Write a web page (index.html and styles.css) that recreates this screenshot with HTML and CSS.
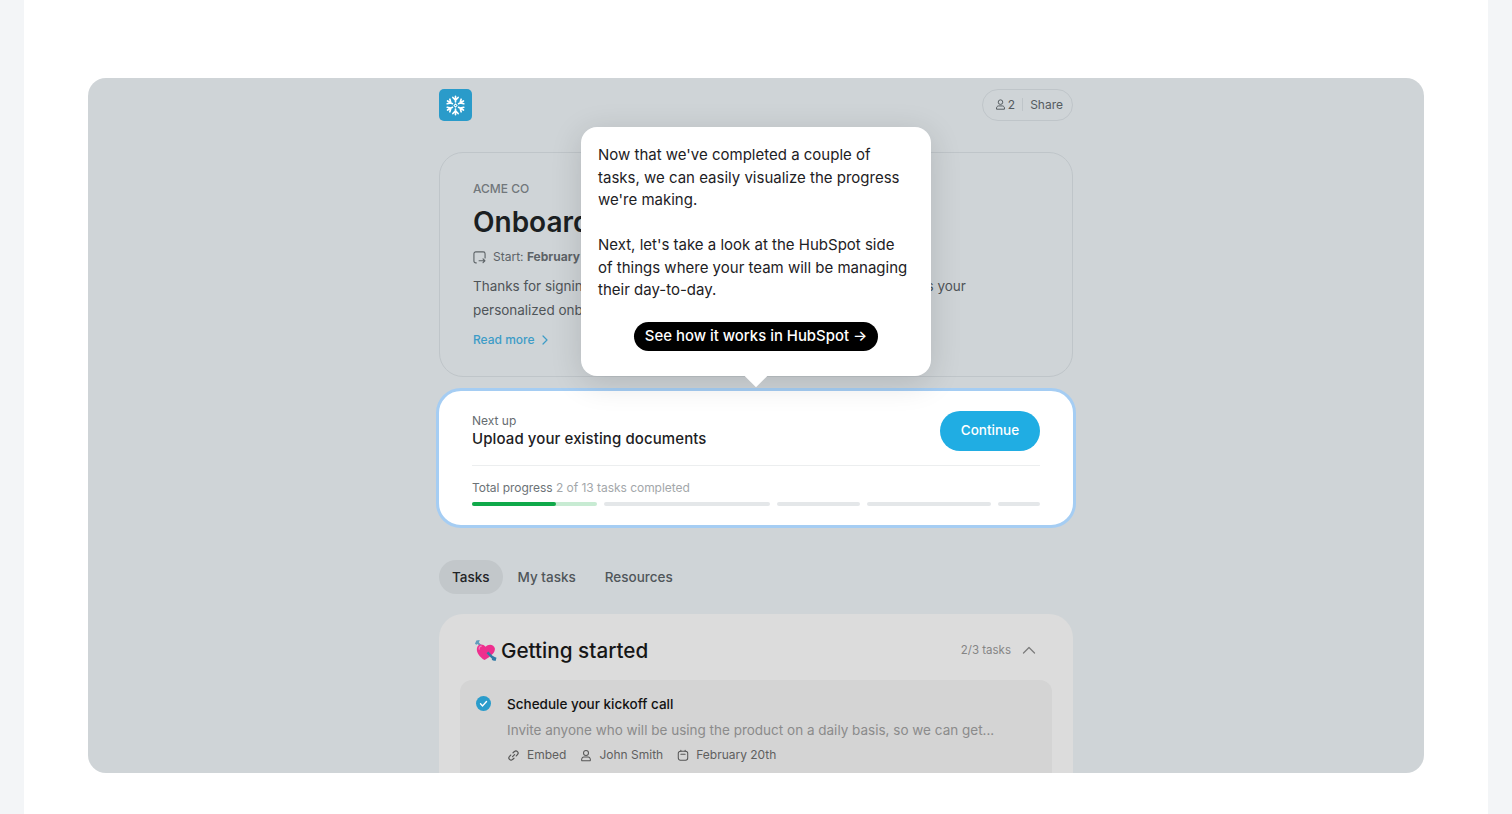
FILE: index.html
```html
<!DOCTYPE html>
<html lang="en">
<head>
    <meta charset="UTF-8">
    <meta name="viewport" content="width=device-width, initial-scale=1.0">
    <title>Onboarding</title>
    <link rel="stylesheet" href="styles.css">
</head>
<body>

<div class="sheet">
    <div class="frame">
        <div class="column">

            <!-- Top bar -->
            <div class="topbar">
                <div class="logo">
                    <svg width="21" height="21" viewBox="0 0 24 24" fill="none" stroke="#fff" stroke-width="1.900" stroke-linecap="round" stroke-linejoin="round">
                        <path d="M12 8V1.500M9 2.800l3 3.200 3-3.200"/>
                        <g transform="rotate(60 12 12)"><path d="M12 8V1.500M9 2.800l3 3.200 3-3.200"/></g>
                        <g transform="rotate(120 12 12)"><path d="M12 8V1.500M9 2.800l3 3.200 3-3.200"/></g>
                        <g transform="rotate(180 12 12)"><path d="M12 8V1.500M9 2.800l3 3.200 3-3.200"/></g>
                        <g transform="rotate(240 12 12)"><path d="M12 8V1.500M9 2.800l3 3.200 3-3.200"/></g>
                        <g transform="rotate(300 12 12)"><path d="M12 8V1.500M9 2.800l3 3.200 3-3.200"/></g>
                        <path d="M12 10.200 13.800 12 12 13.800 10.200 12Z" stroke-width="1.200"/>
                    </svg>
                </div>
                <div class="share">
                    <svg width="11" height="13" viewBox="0 0 14 14" fill="none" stroke="#50565a" stroke-width="1.200">
                        <circle cx="7" cy="4" r="2.900"/>
                        <path d="M2 13c-.6-2.600 1-4.200 2.600-4.200h4.800c1.600 0 3.200 1.600 2.600 4.200Z" stroke-linejoin="round"/>
                    </svg>
                    <span class="share-count">2</span>
                    <span class="share-sep"></span>
                    <span>Share</span>
                </div>
            </div>

            <!-- Plan intro -->
            <div class="hero">
                <div class="company">ACME CO</div>
                <h1>Onboarding plan</h1>
                <div class="start">
                    <svg width="13" height="13" viewBox="0 0 14 14" fill="none" stroke="#5d6367" stroke-width="1.200" stroke-linecap="round" stroke-linejoin="round">
                        <path d="M3.500 12.800H3A2 2 0 0 1 1 10.800V3a2 2 0 0 1 2-2h8a2 2 0 0 1 2 2v4.500"/>
                        <path d="M6.500 10.500h6.300M10.800 8.500l2 2-2 2"/>
                    </svg>
                    <span>Start: <b>February 20th</b></span>
                </div>
                <p class="intro">Thanks for signing up! We're so excited to start working with you. This is your<br>personalized onboarding plan.</p>
                <a class="read-more" href="#">Read more
                    <svg width="8" height="10" viewBox="0 0 8 10" fill="none" stroke="#3d9cc7" stroke-width="1.200" stroke-linecap="round" stroke-linejoin="round"><path d="M2 1l4 4-4 4"/></svg>
                </a>
            </div>

            <!-- Highlighted progress card -->
            <div class="next-card">
                <div class="next-row">
                    <div>
                        <div class="next-label">Next up</div>
                        <div class="next-title">Upload your existing documents</div>
                    </div>
                    <button class="continue">Continue</button>
                </div>
                <div class="progress-label">Total progress <span>2 of 13 tasks completed</span></div>
                <div class="progress">
                    <div class="seg seg-3 seg-first"><div class="seg-done"></div></div>
                    <div class="seg seg-4"></div>
                    <div class="seg seg-2"></div>
                    <div class="seg seg-3"></div>
                    <div class="seg seg-1"></div>
                </div>
            </div>

            <!-- Tabs -->
            <div class="tabs">
                <a class="tab active" href="#">Tasks</a>
                <a class="tab" href="#">My tasks</a>
                <a class="tab" href="#">Resources</a>
            </div>

            <!-- Task group -->
            <div class="group">
                <div class="group-head">
                    <h2>
                        <svg width="23" height="23" viewBox="0 0 24 24">
                            <path d="M3 3l5 5" stroke="#5f9dbd" stroke-width="2.200"/>
                            <path d="M1 5 2.500 1.500 6 1 5 4 2.500 6Z" fill="#5f9dbd"/>
                            <path d="M11 22C6 18.500 2.500 14.500 3 9.800 3.500 5.500 9 4 12 8.200 15 4.500 21 5.500 21.800 10 22.300 14.500 17 18.500 11 22Z" fill="#ee2f8e"/>
                            <path d="M8 7.500C6 7.500 5 9 5.500 11" stroke="#f97fbc" stroke-width="1.200" fill="none"/>
                            <path d="M14 14l7.500 7.500" stroke="#2f7ba6" stroke-width="2.600"/>
                            <path d="M18.500 22l1.500-4 3.500 1.500-1 3.500Z" fill="#2f7ba6"/>
                        </svg>
                        Getting started
                    </h2>
                    <div class="group-count">
                        <span>2/3 tasks</span>
                        <svg width="14" height="8" viewBox="0 0 14 8" fill="none" stroke="#7d7d7d" stroke-width="1.300" stroke-linecap="round" stroke-linejoin="round"><path d="M1.500 7 7 1.500 12.500 7"/></svg>
                    </div>
                </div>
                <div class="task">
                    <svg class="task-check" width="15" height="15" viewBox="0 0 15 15">
                        <circle cx="7.500" cy="7.500" r="7.500" fill="#2a9ccb"/>
                        <path d="M4.500 7.800l2.100 2.100 3.900-4.400" fill="none" stroke="#fff" stroke-width="1.400" stroke-linecap="round" stroke-linejoin="round"/>
                    </svg>
                    <div class="task-body">
                        <div class="task-title">Schedule your kickoff call</div>
                        <div class="task-desc">Invite anyone who will be using the product on a daily basis, so we can get...</div>
                        <div class="task-meta">
                            <span class="meta-item">
                                <svg class="meta-link" width="11" height="11" viewBox="0 0 12 12" fill="none" stroke="#555" stroke-width="1.300" stroke-linecap="round"><path d="M5 7.200 7.200 5M5.500 3 7 1.700a2.300 2.300 0 0 1 3.300 3.300L9 6.500M6.500 9 5 10.300A2.300 2.300 0 0 1 1.700 7L3 5.500"/></svg>
                                Embed
                            </span>
                            <span class="meta-item">
                                <svg width="12" height="13" viewBox="0 0 14 14" fill="none" stroke="#555" stroke-width="1.200" stroke-linejoin="round"><circle cx="7" cy="4" r="2.900"/><path d="M2 13c-.6-2.600 1-4.200 2.600-4.200h4.800c1.600 0 3.200 1.600 2.600 4.200Z"/></svg>
                                John Smith
                            </span>
                            <span class="meta-item">
                                <svg width="12" height="13" viewBox="0 0 14 14" fill="none" stroke="#555" stroke-width="1.200" stroke-linecap="round"><rect x="1.500" y="2" width="11" height="10.500" rx="2.500"/><path d="M4.500 5.500h5M4.500 .8v1.200M9.500 .8v1.200"/></svg>
                                February 20th
                            </span>
                        </div>
                    </div>
                </div>
            </div>
        </div>

        <!-- Guided tour tooltip -->
        <div class="tooltip">
            <p>Now that we've completed a couple of tasks, we can easily visualize the progress we're making.</p>
            <p>Next, let's take a look at the HubSpot side of things where your team will be managing their day-to-day.</p>
            <a class="tooltip-btn" href="#">See how it works in HubSpot →</a>
        </div>
    </div>
</div>

</body>
</html>
```

FILE: styles.css
```css
body {
    font-family: Inter, "Liberation Sans", sans-serif;
    background-color: #f3f5f7;
    margin: 0;
    padding: 0 24px;
}

.sheet {
    background-color: white;
    height: 814px;
    padding: 78px 64px 0;
    box-sizing: border-box;
    overflow: hidden;
}

.frame {
    position: relative;
    height: 695px;
    background-color: #cfd4d7;
    border-radius: 18px;
    overflow: hidden;
}

.column {
    width: 634px;
    margin: 0 auto;
}

.topbar {
    display: flex;
    justify-content: space-between;
    align-items: center;
    padding-top: 11px;
    margin-bottom: 31px;
}

.logo {
    width: 33px;
    height: 32px;
    display: flex;
    align-items: center;
    justify-content: center;
    background-color: #2a9bca;
    border-radius: 5px;
}

.share {
    display: flex;
    align-items: center;
    height: 32px;
    box-sizing: border-box;
    padding: 0 9px 1px 12px;
    border: 1px solid #bfc5c9;
    border-radius: 16px;
    font-size: 12px;
    color: #555b5f;
}
.share-count {
    margin-left: 2px;
}
.share-sep {
    width: 1px;
    height: 13px;
    margin: 0 7px;
    background-color: #bfc5c9;
}

.hero {
    height: 225px;
    box-sizing: border-box;
    padding: 28px 33px 0;
    border: 1px solid #bfc5c9;
    border-radius: 24px;
}
.company {
    font-size: 12px;
    font-weight: 500;
    line-height: 16px;
    color: #71777b;
}
.hero h1 {
    margin: 7px 0 0;
    font-size: 28px;
    font-weight: 600;
    line-height: 36px;
    color: #1b1f22;
}
.start {
    display: flex;
    align-items: center;
    gap: 7px;
    margin-top: 8px;
    font-size: 12px;
    line-height: 18px;
    color: #5d6367;
}
.intro {
    margin: 8px 0 0;
    font-size: 13.5px;
    line-height: 24px;
    letter-spacing: -0.025px;
    color: #4f5559;
    white-space: nowrap;
}
.read-more {
    display: inline-flex;
    align-items: center;
    gap: 6px;
    margin-top: 9px;
    font-size: 12px;
    font-weight: 500;
    line-height: 18px;
    color: #3d9cc7;
    text-decoration: none;
}

.next-card {
    margin: 11px -3px 0;
    height: 140px;
    box-sizing: border-box;
    padding: 20px 33px 0;
    background-color: white;
    border: 3px solid #a5cdf3;
    border-radius: 25px;
}
.next-row {
    display: flex;
    justify-content: space-between;
    align-items: center;
    padding-bottom: 14px;
    border-bottom: 1px solid #eceeef;
}
.next-label {
    font-size: 12px;
    line-height: 16px;
    color: #666c70;
}
.next-title {
    font-size: 15px;
    font-weight: 500;
    line-height: 20px;
    letter-spacing: 0.1px;
    color: #1d2124;
}
.continue {
    width: 100px;
    height: 40px;
    padding: 0 0 2px;
    border: none;
    border-radius: 20px;
    background-color: #20ade3;
    color: white;
    font-family: inherit;
    font-size: 13.5px;
    font-weight: 500;
}

.progress-label {
    margin-top: 14px;
    font-size: 12px;
    line-height: 16px;
    letter-spacing: -0.04px;
    color: #6c7276;
}
.progress-label span {
    color: #a3a7aa;
}
.progress {
    display: flex;
    gap: 7px;
    margin-top: 6px;
}
.seg {
    height: 4px;
    border-radius: 2px;
    background-color: #e4e7e9;
}
.seg-1 { flex: 1; }
.seg-2 { flex: 2; }
.seg-3 { flex: 3; }
.seg-4 { flex: 4; }
.seg-first {
    background-color: #c8ebd3;
}
.seg-done {
    width: 67.5%;
    height: 100%;
    border-radius: 2px;
    background-color: #10a94a;
}

.tabs {
    display: flex;
    gap: 1px;
    margin-top: 32px;
}
.tab {
    padding: 0 14px;
    font-size: 13.5px;
    font-weight: 500;
    line-height: 34px;
    color: #50565a;
    text-decoration: none;
}
.tab.active {
    padding: 0 13px;
    background-color: #c2c7ca;
    border-radius: 17px;
    color: #1f2326;
}

.group {
    margin-top: 20px;
    padding: 0 21px;
    height: 200px;
    background-color: #dcdcdc;
    border-radius: 24px;
}
.group-head {
    display: flex;
    justify-content: space-between;
    align-items: center;
    box-sizing: border-box;
    height: 66px;
    padding: 6px 16px 0 14px;
}
.group-head h2 {
    display: flex;
    align-items: center;
    gap: 4px;
    margin: 0;
    font-size: 20.7px;
    font-weight: 500;
    color: #161616;
}
.group-count {
    display: flex;
    align-items: center;
    gap: 11px;
    font-size: 11.5px;
    color: #858585;
}

.task {
    display: flex;
    gap: 16px;
    padding: 15px 16px;
    height: 120px;
    background-color: #d4d4d4;
    border-radius: 12px;
}
.task-check {
    flex: none;
    margin-top: 1px;
}
.task-title {
    font-size: 13.5px;
    font-weight: 500;
    line-height: 18px;
    color: #121212;
}
.task-desc {
    margin-top: 8px;
    font-size: 13.5px;
    line-height: 18px;
    color: #8b8b8b;
}
.task-meta {
    display: flex;
    gap: 14px;
    margin-top: 7px;
    font-size: 12px;
    line-height: 18px;
    color: #5f5f5f;
}
.meta-item {
    display: flex;
    align-items: center;
    gap: 7px;
}
.meta-link {
    margin: 0 1px;
}

.tooltip {
    position: absolute;
    left: 493px;
    top: 49px;
    width: 350px;
    height: 249px;
    box-sizing: border-box;
    padding: 17px 20px 0 17px;
    background-color: white;
    border-radius: 16px;
    box-shadow: 0 6px 32px rgba(0, 0, 0, 0.14);
    text-align: center;
}
.tooltip::after {
    content: "";
    position: absolute;
    left: 167px;
    bottom: -8px;
    width: 16px;
    height: 16px;
    background-color: white;
    transform: rotate(45deg);
}
.tooltip p {
    margin: 0 0 22.5px;
    font-size: 15px;
    line-height: 22.5px;
    color: #1d2124;
    text-align: left;
}
.tooltip p + p {
    margin-bottom: 20.5px;
}
.tooltip-btn {
    display: inline-block;
    margin-left: 3px;
    padding: 0 11px;
    background-color: black;
    border-radius: 15px;
    color: white;
    font-size: 14.9px;
    font-weight: 500;
    line-height: 29px;
    text-decoration: none;
}
```
